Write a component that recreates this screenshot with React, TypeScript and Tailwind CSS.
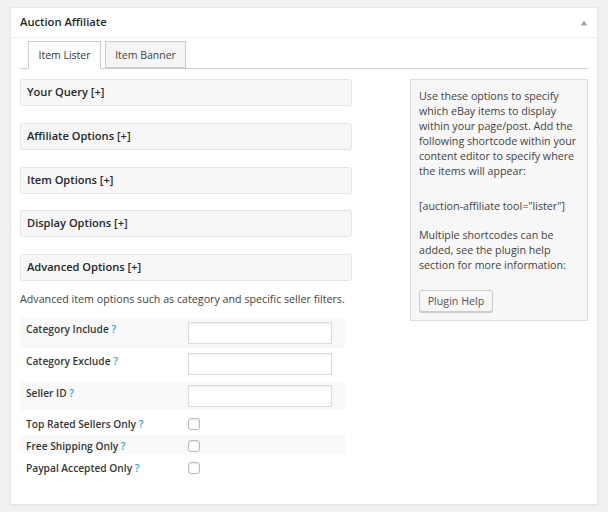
import React from "react";

const font = { fontFamily: "'Open Sans', 'Liberation Sans', sans-serif" };

function Accordion({ title }: { title: string }) {
  return (
    <div className="h-[27px] border border-[#e5e5e5] rounded-[3px] bg-[#f7f7f7] pl-[6px] flex items-center text-[11.1px] font-semibold text-[#23282d]">
      {title} [+]
    </div>
  );
}

function Help() {
  return <span className="text-[#2ea2cc] font-semibold"> ?</span>;
}

type Row = {
  label: string;
  kind: "input" | "check";
  h: string;
  lp: string;
  cp: string;
  bg: boolean;
};

const rows: Row[] = [
  { label: "Category Include", kind: "input", h: "h-[30px]", lp: "pt-[4px]", cp: "pt-[4px]", bg: true },
  { label: "Category Exclude", kind: "input", h: "h-[34px]", lp: "pt-[6px]", cp: "pt-[5px]", bg: false },
  { label: "Seller ID", kind: "input", h: "h-[29px]", lp: "pt-[4px]", cp: "pt-[3px]", bg: true },
  { label: "Top Rated Sellers Only", kind: "check", h: "h-[24px]", lp: "pt-[6px]", cp: "pt-[7px]", bg: false },
  { label: "Free Shipping Only", kind: "check", h: "h-[19px]", lp: "pt-[4px]", cp: "pt-[5px]", bg: true },
  { label: "Paypal Accepted Only", kind: "check", h: "h-[23px]", lp: "pt-[7px]", cp: "pt-[8px]", bg: false },
];

export default function App() {
  return (
    <div className="min-h-[512px] bg-[#f1f1f1] pt-[7px] pl-[10px]" style={font}>
      <div className="w-[588px] h-[498px] border border-[#e5e5e5] bg-white shadow-[0_1px_1px_rgba(0,0,0,0.04)] text-[#444]">
        <div className="h-[30px] border-b border-[#eeeeee] flex items-center justify-between pl-[9px] pr-[9px]">
          <span className="text-[11.2px] font-semibold text-[#23282d]">Auction Affiliate</span>
          <svg width="8" height="6" viewBox="0 0 8 6">
            <path d="M4 0.5 L7.5 5.5 L0.5 5.5 Z" fill="#aaa" />
          </svg>
        </div>
        <div className="px-[9px]">
          <div className="mt-[3px] flex gap-[4px] pl-[8px] border-b border-[#cccccc] h-[28px]">
            <div className="w-[73px] h-[28px] pt-[2px] border border-[#cccccc] border-b-white bg-white flex items-center justify-center text-[10.5px] text-[#32373c]">
              Item Lister
            </div>
            <div className="w-[81px] h-[27px] pt-[2px] border border-[#cccccc] bg-[#f4f4f4] flex items-center justify-center text-[10.5px] text-[#444]">
              Item Banner
            </div>
          </div>
          <div className="mt-[10px] flex justify-between">
            <div className="w-[332px]">
              <div className="flex flex-col gap-[16.75px]">
                <Accordion title="Your Query" />
                <Accordion title="Affiliate Options" />
                <Accordion title="Item Options" />
                <Accordion title="Display Options" />
                <Accordion title="Advanced Options" />
              </div>
              <p className="mt-[11px] text-[10.7px] leading-[15px] whitespace-nowrap">
                Advanced item options such as category and specific seller filters.
              </p>
              <div className="mt-[11px] w-[325px]">
                {rows.map((r) => (
                  <div key={r.label} className={`flex ${r.h} ${r.bg ? "bg-[#f9f9f9]" : "bg-white"}`}>
                    <div className={`w-[168px] pl-[6px] text-[10.2px] leading-[15px] font-semibold text-[#32373c] ${r.lp}`}>
                      {r.label}
                      <Help />
                    </div>
                    <div className={r.cp}>
                      {r.kind === "input" ? (
                        <div className="w-[144px] h-[22px] border border-[#dddddd] bg-white shadow-[inset_0_1px_2px_rgba(0,0,0,0.07)]" />
                      ) : (
                        <div className="w-[12px] h-[12px] border border-[#b4b9be] rounded-[3px] bg-white shadow-[inset_0_1px_2px_rgba(0,0,0,0.1)]" />
                      )}
                    </div>
                  </div>
                ))}
              </div>
            </div>
            <div className="w-[178px] h-[242px] border border-[#dddddd] bg-[#f7f7f7] pl-[8px] pr-[6px] pt-[9px] text-[10.7px] leading-[15px] text-[#444]">
              <p>
                Use these options to specify which eBay items to display within your page/post. Add the following
                shortcode within your content editor to specify where the items will appear:
              </p>
              <p className="mt-[20px]">[auction-affiliate tool="lister"]</p>
              <p className="mt-[14px]">
                Multiple shortcodes can be added, see the plugin help section for more information:
              </p>
              <div className="mt-[17px] w-[74px] h-[22px] border border-[#cccccc] rounded-[3px] bg-[#f7f7f7] shadow-[0_1px_0_#cccccc] flex items-center justify-center text-[10.7px] text-[#555]">
                Plugin Help
              </div>
            </div>
          </div>
        </div>
      </div>
    </div>
  );
}
